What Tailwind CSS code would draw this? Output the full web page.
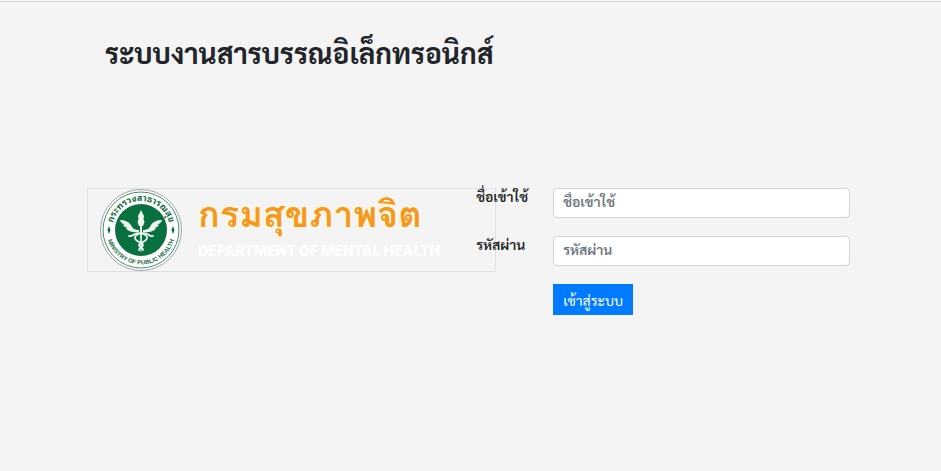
<!DOCTYPE html>
<html lang="th">
<head>
    <meta charset="UTF-8">
    <meta name="viewport" content="width=device-width, initial-scale=1.0">
    <title>ระบบงานสารบรรณอิเล็กทรอนิกส์</title>
    <script src="https://cdn.jsdelivr.net/npm/@tailwindcss/browser@4"></script>
</head>
<body class="bg-[#f4f4f4] text-[#212529] font-['Sarabun','Noto_Sans_Thai_Looped','Noto_Sans',sans-serif]">

    <!-- TOP RULE -->
    <div class="h-0.5 border-b border-[#d5d8d8] bg-[#f8f8f8]"></div>

    <main class="pl-[87px] pr-[91px] pt-6.5">
        <h1 class="pl-[18px] text-[28px] leading-12 font-bold whitespace-nowrap">ระบบงานสารบรรณอิเล็กทรอนิกส์</h1>

        <div class="mt-28 grid grid-cols-[51%_1fr] items-start">

            <!-- LOGO -->
            <div class="w-[409px] border border-[#dee2e6]">
                <svg viewBox="0 0 407 82" class="block w-full" role="img" aria-label="กรมสุขภาพจิต">
                    <defs>
                        <path id="arc-top" d="M24 41 A29 29 0 0 1 82 41"/>
                        <path id="arc-bottom" d="M18.500 41 A34.500 34.500 0 0 0 87.500 41"/>
                    </defs>
                    <circle cx="53" cy="41" r="40.500" fill="#fff" stroke="#a0a2a1" stroke-width="1"/>
                    <circle cx="53" cy="41" r="38" fill="none" stroke="#3f8f66" stroke-width="1"/>
                    <circle cx="53" cy="41" r="26" fill="#0b7040"/>
                    <g fill="#176b43" font-weight="700" text-anchor="middle">
                        <text font-size="9" class="font-['Noto_Sans_Thai_Looped','Noto_Sans',sans-serif]"><textPath href="#arc-top" startOffset="50%">กระทรวงสาธารณสุข</textPath></text>
                        <text font-size="6" class="font-['Liberation_Sans',sans-serif]"><textPath href="#arc-bottom" startOffset="50%">MINISTRY OF PUBLIC HEALTH</textPath></text>
                    </g>
                    <path d="M21 37l1.500 4-1.500 4-1.500-4zM85 37l1.500 4-1.500 4-1.500-4z" fill="#0b7040"/>
                    <!-- winged staff with two serpents -->
                    <g fill="#eef8f1">
                        <path d="M53 21l1.500 3 1.500 3-.5 3 1 3-1.500 4h-4l-1.500-4 1-3-.5-3 1.500-3z"/>
                        <path d="M52 36h2l-.3 24-.7 4-.7-4z"/>
                        <path d="M51 41c-4 0-7-2-8-5-2-3-6-5-11-5 1 3 3 4 5 4.500l-2 .2c1 2 2.500 3 4.500 3l-1.500 1c3 3 8 4 13 3.300z"/>
                        <path d="M55 41c4 0 7-2 8-5 2-3 6-5 11-5-1 3-3 4-5 4.500l2 .2c-1 2-2.500 3-4.500 3l1.500 1c-3 3-8 4-13 3.300z"/>
                    </g>
                    <g fill="none" stroke="#eef8f1" stroke-width="1.800" stroke-linecap="round">
                        <path d="M41 47c2 1 4-1 6-2 5-2 12 0 12 4 0 4-8 4-8 7 0 2 4 2 4 5"/>
                        <path d="M65 47c-2 1-4-1-6-2-5-2-12 0-12 4 0 4 8 4 8 7 0 2-4 2-4 5"/>
                    </g>
                    <text x="110" y="38" font-size="36" font-weight="700" fill="#f7981d" stroke="#fff8e6" stroke-width="3" stroke-linejoin="round" paint-order="stroke" class="font-['Loma','Noto_Sans_Thai_Looped',sans-serif]">กรมสุขภาพจิต</text>
                    <text x="110" y="67" font-size="14" font-weight="800" fill="#fff" class="font-['Inter',sans-serif]">DEPARTMENT OF MENTAL HEALTH</text>
                </svg>
            </div>

            <!-- LOGIN FORM -->
            <form class="relative space-y-[18px] text-sm">
                <div class="flex items-start">
                    <label for="username" class="w-[77px] shrink-0 leading-4 font-semibold">ชื่อเข้าใช้</label>
                    <input id="username" type="text" placeholder="ชื่อเข้าใช้" class="h-[30px] w-full min-w-0 rounded border border-[#ced4da] bg-white px-[9px] pb-1 font-semibold placeholder:text-[#6c757d]">
                </div>
                <div class="flex items-start">
                    <label for="password" class="w-[77px] shrink-0 leading-4 font-semibold">รหัสผ่าน</label>
                    <input id="password" type="password" placeholder="รหัสผ่าน" class="h-[30px] w-full min-w-0 rounded border border-[#ced4da] bg-white px-[9px] pb-1 font-semibold placeholder:text-[#6c757d]">
                </div>
                <button type="submit" class="ml-[77px] h-[31px] bg-[#007bff] px-2.5 text-white">เข้าสู่ระบบ</button>
            </form>

        </div>
    </main>

</body>
</html>
